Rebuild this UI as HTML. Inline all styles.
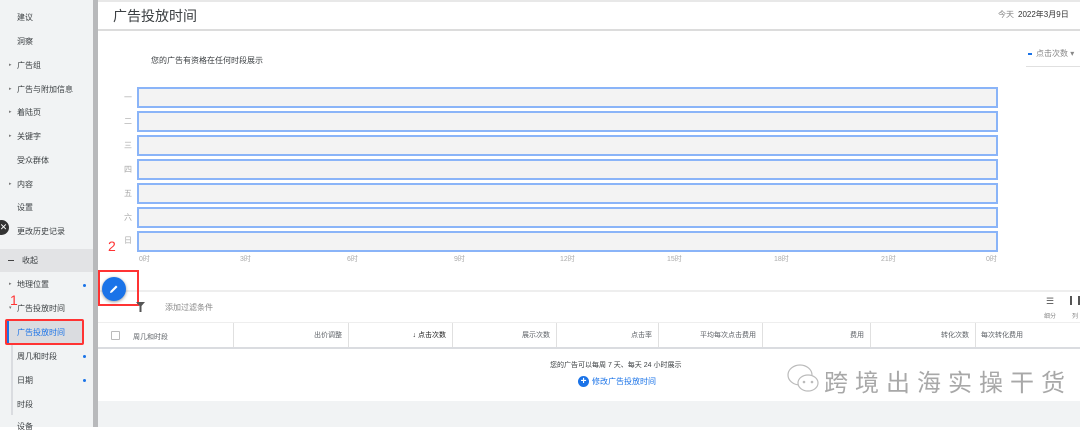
<!DOCTYPE html>
<html><head><meta charset="utf-8"><style>
*{margin:0;padding:0;box-sizing:border-box}
body{width:1080px;height:427px;overflow:hidden;position:relative;background:#fff;font-family:"Liberation Sans","Noto Sans CJK SC",sans-serif;color:#3c4043}
.a{position:absolute;white-space:nowrap}
.sb{position:absolute;left:0;top:0;width:93px;height:427px;background:#f1f3f4}
.si{position:absolute;left:17px;font-size:8px;color:#3c4043}
.ar{position:absolute;left:9px;font-size:5px;color:#777}
.dot{position:absolute;left:83px;width:3px;height:3px;border-radius:50%;background:#1a73e8}
.bar{position:absolute;left:137px;width:861px;height:21px;background:#f3f3f3;border:2px solid #8ab4f8}
.dl{position:absolute;left:124px;font-size:8px;color:#aaa}
.hl{position:absolute;top:254px;font-size:7px;color:#aaa}
.th{position:absolute;top:323px;height:25px;border-right:1px solid #e0e0e0;font-size:7px;color:#5f6368;line-height:25px;text-align:right;padding-right:6px}
</style></head><body>
<div class="sb"></div>
<div class="a" style="left:93px;top:0;width:5px;height:427px;background:#b8b9bb"></div>
<div class="si" style="top:12px">建议</div>
<div class="si" style="top:36px">洞察</div>
<div class="ar" style="top:62px">▸</div><div class="si" style="top:60px">广告组</div>
<div class="ar" style="top:86px">▸</div><div class="si" style="top:84px">广告与附加信息</div>
<div class="ar" style="top:109px">▸</div><div class="si" style="top:107px">着陆页</div>
<div class="ar" style="top:133px">▸</div><div class="si" style="top:131px">关键字</div>
<div class="si" style="top:155px">受众群体</div>
<div class="ar" style="top:181px">▸</div><div class="si" style="top:179px">内容</div>
<div class="si" style="top:202px">设置</div>
<div class="si" style="top:226px">更改历史记录</div>
<div class="a" style="left:-6px;top:220px;width:15px;height:15px;border-radius:50%;background:#333;color:#fff;font-size:9px;text-align:center;line-height:15px;padding-left:4px">✕</div>
<div class="a" style="left:0;top:249px;width:93px;height:23px;background:#e2e3e5"></div>
<div class="a" style="left:8px;top:260px;width:6px;height:1px;background:#444"></div>
<div class="si" style="top:255px;left:22px">收起</div>
<div class="ar" style="top:281px">▸</div><div class="si" style="top:279px">地理位置</div><div class="dot" style="top:284px"></div>
<div class="ar" style="top:305px">▾</div><div class="si" style="top:303px">广告投放时间</div>
<div class="a" style="left:11px;top:320px;width:2px;height:95px;background:#dadce0"></div>
<div class="a" style="left:6px;top:320px;width:77px;height:23px;background:#dadce0;border-left:3px solid #1a73e8"></div>
<div class="si" style="top:327px;color:#1a73e8">广告投放时间</div>
<div class="si" style="top:351px">周几和时段</div><div class="dot" style="top:355px"></div>
<div class="si" style="top:375px">日期</div><div class="dot" style="top:379px"></div>
<div class="si" style="top:399px">时段</div>
<div class="si" style="top:421px">设备</div>
<div class="a" style="left:5px;top:319px;width:79px;height:26px;border:2px solid #f33;border-radius:2px"></div>
<div class="a" style="left:10px;top:292px;font-size:14px;color:#f33">1</div>

<div class="a" style="left:98px;top:0;width:982px;height:2px;background:#e8e8e8"></div>
<div class="a" style="left:98px;top:29px;width:982px;height:2px;background:#dcdcdc"></div>
<div class="a" style="left:113px;top:6px;font-size:14px;color:#3c4043">广告投放时间</div>
<div class="a" style="left:998px;top:9px;font-size:8px;color:#888">今天</div>
<div class="a" style="left:1018px;top:9px;font-size:8px;color:#333">2022年3月9日</div>
<div class="a" style="left:151px;top:55px;font-size:8px;color:#3c4043">您的广告有资格在任何时段展示</div>
<div class="a" style="left:1028px;top:53px;width:4px;height:2px;background:#1a73e8"></div>
<div class="a" style="left:1036px;top:48px;font-size:8px;color:#888">点击次数 ▾</div>
<div class="a" style="left:1026px;top:66px;width:54px;height:1px;background:#e0e0e0"></div>
<div class="bar" style="top:87px"></div><div class="dl" style="top:92px">一</div>
<div class="bar" style="top:111px"></div><div class="dl" style="top:116px">二</div>
<div class="bar" style="top:135px"></div><div class="dl" style="top:140px">三</div>
<div class="bar" style="top:159px"></div><div class="dl" style="top:164px">四</div>
<div class="bar" style="top:183px"></div><div class="dl" style="top:188px">五</div>
<div class="bar" style="top:207px"></div><div class="dl" style="top:212px">六</div>
<div class="bar" style="top:231px"></div><div class="dl" style="top:235px">日</div>
<div class="hl" style="left:139px">0时</div><div class="hl" style="left:240px">3时</div><div class="hl" style="left:347px">6时</div><div class="hl" style="left:454px">9时</div><div class="hl" style="left:560px">12时</div><div class="hl" style="left:667px">15时</div><div class="hl" style="left:774px">18时</div><div class="hl" style="left:881px">21时</div><div class="hl" style="left:986px">0时</div>
<div class="a" style="left:98px;top:290px;width:982px;height:2px;background:#eee"></div>
<div class="a" style="left:108px;top:238px;font-size:14px;color:#f33">2</div>
<div class="a" style="left:98px;top:270px;width:41px;height:36px;border:2px solid #f33"></div>
<div class="a" style="left:102px;top:277px;width:24px;height:24px;border-radius:50%;background:#1a73e8;box-shadow:0 1px 3px rgba(0,0,0,.4)"></div>
<svg class="a" style="left:108px;top:283px" width="12" height="12" viewBox="0 0 12 12"><path d="M2 10 L2.5 8 L8 2.5 L9.5 4 L4 9.5 Z" fill="#fff"/></svg>
<svg class="a" style="left:136px;top:302px" width="9" height="10" viewBox="0 0 9 10"><path d="M0 0H9L5.5 4V10H3.5V4Z" fill="#555"/></svg>
<div class="a" style="left:165px;top:302px;font-size:8px;color:#888">添加过滤条件</div>
<div class="a" style="left:1046px;top:296px;font-size:9px;color:#555">☰</div>
<div class="a" style="left:1070px;top:296px;width:10px;height:9px;border-left:2px solid #555;border-right:2px solid #555"></div>
<div class="a" style="left:1044px;top:311px;font-size:6px;color:#888">细分</div>
<div class="a" style="left:1072px;top:311px;font-size:6px;color:#888">列</div>
<div class="a" style="left:98px;top:322px;width:982px;height:1px;background:#eee"></div>
<div class="a" style="left:111px;top:331px;width:9px;height:9px;border:1px solid #bbb;border-radius:1px"></div>
<div class="a" style="left:133px;top:332px;font-size:7px;color:#5f6368">周几和时段</div>
<div class="th" style="left:233px;width:1px;padding:0"></div>
<div class="th" style="left:234px;width:115px">出价调整</div>
<div class="th" style="left:349px;width:104px;color:#222">↓ 点击次数</div>
<div class="th" style="left:453px;width:104px">展示次数</div>
<div class="th" style="left:557px;width:102px">点击率</div>
<div class="th" style="left:659px;width:104px">平均每次点击费用</div>
<div class="th" style="left:763px;width:108px">费用</div>
<div class="th" style="left:871px;width:105px">转化次数</div>
<div class="th" style="left:976px;width:104px;border:none;text-align:left;padding-left:5px">每次转化费用</div>
<div class="a" style="left:98px;top:347px;width:982px;height:2px;background:#dadce0"></div>
<div class="a" style="left:550px;top:360px;font-size:7px;color:#3c4043">您的广告可以每周 7 天、每天 24 小时展示</div>
<div class="a" style="left:578px;top:376px;width:11px;height:11px;border-radius:50%;background:#1a73e8;color:#fff;font-size:10px;line-height:11px;text-align:center;font-weight:bold">+</div>
<div class="a" style="left:592px;top:376px;font-size:8px;color:#1a73e8">修改广告投放时间</div>
<div class="a" style="left:98px;top:401px;width:982px;height:26px;background:#f1f3f4"></div>
<svg class="a" style="left:786px;top:362px" width="36" height="34" viewBox="0 0 36 34"><ellipse cx="14" cy="13" rx="12" ry="10" fill="none" stroke="#bbb" stroke-width="1.2"/><ellipse cx="22" cy="21" rx="10" ry="8" fill="#fff" stroke="#bbb" stroke-width="1.2"/><circle cx="18" cy="20" r="1.3" fill="#bbb"/><circle cx="26" cy="20" r="1.3" fill="#bbb"/></svg>
<div class="a" style="left:824px;top:363px;font-size:24px;color:#a8a8a8;letter-spacing:7px">跨境出海实操干货</div>
</body></html>
